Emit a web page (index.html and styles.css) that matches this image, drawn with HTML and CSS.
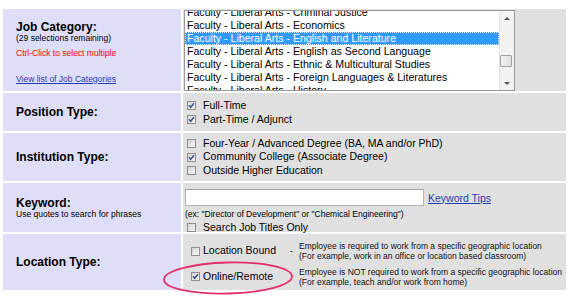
FILE: index.html
```html
<!DOCTYPE html>
<html lang="en">
<head>
    <meta charset="UTF-8">
    <title>Job Search</title>
    <link rel="stylesheet" href="styles.css">
</head>
<body>
    <div class="search-form">
        <!-- Job category -->
        <div class="label-cell job-label">
            <div class="label-title">Job Category:</div>
            <div class="label-note">(29 selections remaining)</div>
            <div class="label-hint">Ctrl-Click to select multiple</div>
            <a class="label-link" href="#">View list of Job Categories</a>
        </div>
        <div class="field-cell job-field">
            <div class="listbox">
                <div class="listbox-view">
                    <div class="listbox-options">
                        <div class="option">Faculty - Liberal Arts - Criminal Justice</div>
                        <div class="option">Faculty - Liberal Arts - Economics</div>
                        <div class="option selected">Faculty - Liberal Arts - English and Literature</div>
                        <div class="option">Faculty - Liberal Arts - English as Second Language</div>
                        <div class="option">Faculty - Liberal Arts - Ethnic &amp; Multicultural Studies</div>
                        <div class="option">Faculty - Liberal Arts - Foreign Languages &amp; Literatures</div>
                        <div class="option">Faculty - Liberal Arts - History</div>
                    </div>
                </div>
                <div class="scrollbar">
                    <div class="scroll-btn"><span class="arrow-up"></span></div>
                    <div class="scroll-track"><span class="thumb"></span></div>
                    <div class="scroll-btn"><span class="arrow-down"></span></div>
                </div>
            </div>
        </div>

        <!-- Position type -->
        <div class="label-cell">
            <div class="label-title">Position Type:</div>
        </div>
        <div class="field-cell check-list position-list">
            <label class="check-item"><span class="box checked"><svg viewBox="0 0 9 9"><path d="M2 4.3 L3.7 6.3 L7 2.2"/></svg></span>Full-Time</label>
            <label class="check-item"><span class="box checked"><svg viewBox="0 0 9 9"><path d="M2 4.3 L3.7 6.3 L7 2.2"/></svg></span>Part-Time / Adjunct</label>
        </div>

        <!-- Institution type -->
        <div class="label-cell">
            <div class="label-title">Institution Type:</div>
        </div>
        <div class="field-cell check-list">
            <label class="check-item"><span class="box"></span>Four-Year / Advanced Degree (BA, MA and/or PhD)</label>
            <label class="check-item"><span class="box checked"><svg viewBox="0 0 9 9"><path d="M2 4.3 L3.7 6.3 L7 2.2"/></svg></span>Community College (Associate Degree)</label>
            <label class="check-item"><span class="box"></span>Outside Higher Education</label>
        </div>

        <!-- Keyword -->
        <div class="label-cell">
            <div class="label-title">Keyword:</div>
            <div class="label-note">Use quotes to search for phrases</div>
        </div>
        <div class="field-cell keyword-field">
            <div class="keyword-row">
                <input type="text" class="keyword-input">
                <a class="tips-link" href="#">Keyword Tips</a>
            </div>
            <div class="keyword-example">(ex: "Director of Development" or "Chemical Engineering")</div>
            <label class="check-item"><span class="box"></span>Search Job Titles Only</label>
        </div>

        <!-- Location type -->
        <div class="label-cell">
            <div class="label-title">Location Type:</div>
        </div>
        <div class="field-cell location-field">
            <label class="check-item"><span class="box"></span>Location Bound</label>
            <div class="dash">-</div>
            <div class="location-desc">Employee is required to work from a specific geographic location<br>(For example, work in an office or location based classroom)</div>

            <label class="check-item"><span class="box checked"><svg viewBox="0 0 9 9"><path d="M2 4.3 L3.7 6.3 L7 2.2"/></svg></span>Online/Remote</label>
            <div class="dash"></div>
            <div class="location-desc">Employee is NOT required to work from a specific geographic location<br>(For example, teach and/or work from home)</div>
        </div>
    </div>

    <!-- hand drawn highlight around Online/Remote -->
    <svg class="highlight-ring" width="140" height="38" viewBox="0 0 140 38">
        <ellipse cx="70" cy="19" rx="64" ry="15.5" transform="rotate(-1.5 70 19)"/>
    </svg>
</body>
</html>
```

FILE: styles.css
```css
body {
    margin: 0;
    background-color: white;
    font-family: "Liberation Sans", Arial, sans-serif;
    color: #000;
}
.search-form {
    display: grid;
    grid-template-columns: 178px 383px;
    grid-template-rows: 82px 38px 48px 49px 56px;
    gap: 2px;
    margin: 9px 0 0 3px;
}
.label-cell {
    background-color: #dedef8;
    padding-left: 13px;
    display: flex;
    flex-direction: column;
    justify-content: center;
}
.field-cell {
    background-color: #e0e0e0;
    font-size: 10.5px;
}
.label-title {
    font-size: 12px;
    line-height: 12px;
    font-weight: bold;
}
.label-note {
    font-size: 8.5px;
    line-height: 10px;
}
.job-label {
    justify-content: flex-start;
    padding-top: 12px;
}
.label-hint {
    font-size: 8.5px;
    line-height: 10px;
    color: #f00;
    margin-top: 4.5px;
}
.label-link {
    font-size: 8.5px;
    line-height: 10px;
    color: #1f3fae;
    margin-top: 16px;
}

/* Listbox */
.job-field {
    padding: 1px 0 0 1px;
}
.listbox {
    display: flex;
    width: 331px;
    height: 81px;
    box-sizing: border-box;
    border: 1px solid #9a9a9a;
    background-color: white;
}
.listbox-view {
    flex: 1;
    overflow: hidden;
}
.listbox-options {
    margin-top: -5px; /* list is scrolled a little */
}
.option {
    font-size: 10.6px;
    line-height: 13px;
    height: 13px;
    padding-left: 2px;
    white-space: nowrap;
}
.option.selected {
    background-color: #3399ff;
    color: white;
    outline: 1px dotted #d8e8ff;
    outline-offset: -1px;
}
.scrollbar {
    width: 14px;
    display: flex;
    flex-direction: column;
    background-color: #f2f2f2;
    border-left: 1px solid #e4e4e4;
}
.scroll-btn {
    height: 14px;
    display: flex;
    justify-content: center;
    align-items: center;
}
.scroll-track {
    flex: 1;
}
.arrow-up {
    border-left: 3px solid transparent;
    border-right: 3px solid transparent;
    border-bottom: 3px solid #555;
}
.arrow-down {
    border-left: 3px solid transparent;
    border-right: 3px solid transparent;
    border-top: 3px solid #555;
}
.thumb {
    display: block;
    width: 12px;
    height: 12px;
    margin-top: 30px;
    box-sizing: border-box;
    border: 1px solid #a3a3a3;
    border-radius: 1px;
    background: linear-gradient(to right, #f4f4f4, #dedede);
}

/* Checkboxes */
.check-list {
    padding-left: 4px;
    display: flex;
    flex-direction: column;
    justify-content: center;
}
.check-item {
    display: flex;
    align-items: center;
    gap: 7px;
    line-height: 13.5px;
    white-space: nowrap;
}
.position-list .check-item {
    line-height: 14px;
}
.box {
    width: 9px;
    height: 9px;
    box-sizing: border-box;
    border: 1px solid #8e8f8f;
    background: linear-gradient(135deg, #d4d4d4, #f6f6f6);
    display: flex;
}
.box svg {
    width: 7px;
    height: 7px;
    margin: 0;
}
.box svg path {
    fill: none;
    stroke: #3f528c;
    stroke-width: 1.5;
}
.box.checked svg {
    width: 9px;
    height: 9px;
    margin: -1px;
}

/* Keyword */
.keyword-field {
    padding: 6px 0 0 2px;
}
.keyword-row {
    display: flex;
    align-items: center;
}
.keyword-input {
    width: 239px;
    height: 17px;
    box-sizing: border-box;
    margin: 0;
    border: 1px solid #b0b3b8;
    border-top-color: #a0a3a8;
    background-color: white;
}
.tips-link {
    margin-left: 4px;
    color: #1f3fae;
    font-size: 10.5px;
}
.keyword-example {
    font-size: 8.5px;
    line-height: 10px;
    margin-top: 3px;
}
.keyword-field .check-item {
    margin: 2px 0 0 2px;
}

/* Location */
.location-field {
    display: grid;
    grid-template-columns: 96px 12px auto;
    align-content: start;
    align-items: center;
    row-gap: 5.5px;
    padding: 7px 0 0 8px;
}
.location-field .check-item {
    gap: 3px;
}
.dash {
    padding-left: 3px;
    font-size: 8.5px;
}
.location-desc {
    font-size: 8.5px;
    line-height: 10px;
    color: #111;
    white-space: nowrap;
}

/* Highlight ring drawn over the form */
.highlight-ring {
    position: absolute;
    left: 158px;
    top: 259px;
}
.highlight-ring ellipse {
    fill: none;
    stroke: #e2306b;
    stroke-width: 1.8;
}
```
